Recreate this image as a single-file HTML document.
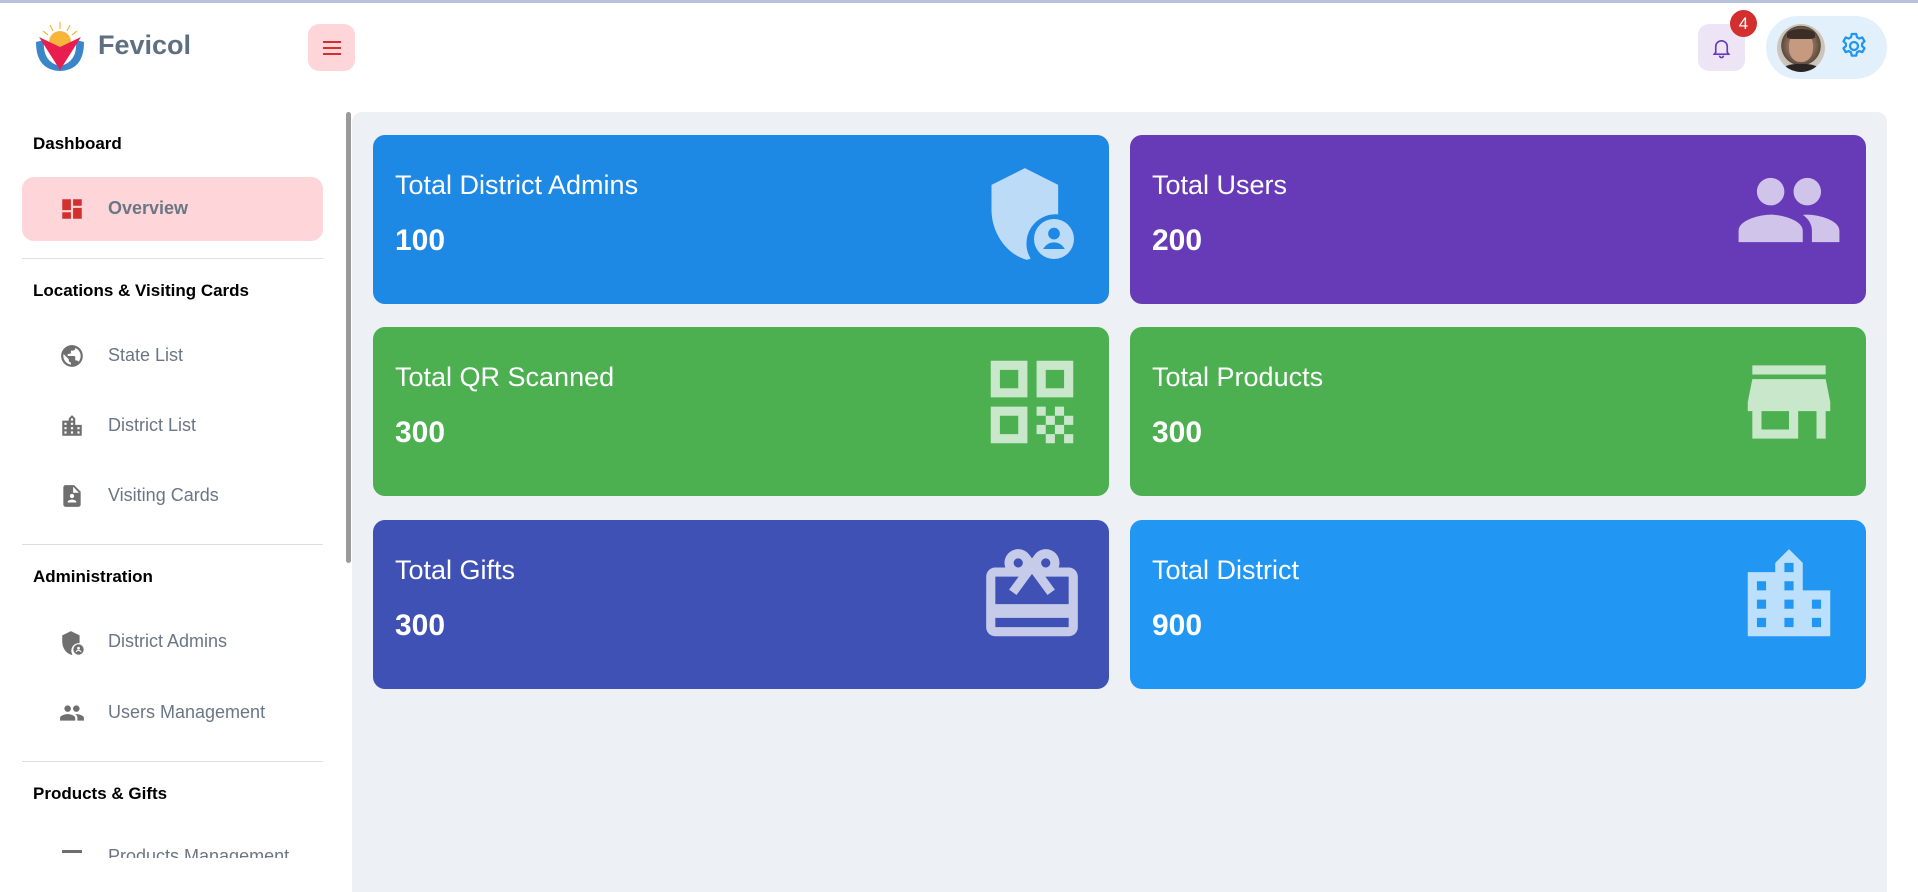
<!DOCTYPE html>
<html><head><meta charset="utf-8"><style>
*{box-sizing:border-box;margin:0;padding:0}
body{width:1918px;height:880px;overflow:hidden;background:#fff;font-family:"Liberation Sans",sans-serif;position:relative}
.topline{position:absolute;left:0;top:0;width:1918px;height:3px;background:#b7c3da}
.abs{position:absolute}
.brand{left:98px;top:30px;font-size:27px;font-weight:bold;color:#5f6f82}
.menu{left:308px;top:24px;width:47px;height:47px;border-radius:11px;background:#fed6da}
.menu i{position:absolute;left:15px;width:18px;height:2px;background:#d32f2f}
.bell{left:1698px;top:24px;width:47px;height:47px;border-radius:11px;background:#ede4f6}
.badge{left:1730px;top:10px;width:27px;height:27px;border-radius:50%;background:#d32f2f;color:#fff;font-size:17px;text-align:center;line-height:27px}
.pill{left:1766px;top:16px;width:121px;height:63px;border-radius:32px;background:#e2f0fc}
.avatar{left:1777px;top:24px;width:48px;height:48px;border-radius:50%;overflow:hidden;background:radial-gradient(circle at 50% 45%,#b08a70 0,#9a7660 30%,#5a4a3e 55%,#c8c2b8 56%,#d8d3cb 100%)}
.side h4{position:absolute;left:33px;font-size:17px;font-weight:bold;color:#000}
.item{position:absolute;left:108px;font-size:18px;color:#6b7684}
.ico{position:absolute;left:59px;width:26px;height:26px}
.div{position:absolute;left:22px;width:301px;height:1px;background:#dedede}
.main{left:352px;top:112px;width:1535px;height:780px;background:#edf0f5;border-radius:10px 10px 0 0}
.scroll{left:346px;top:112px;width:5px;height:451px;background:#9a9a9a;border-radius:3px}
.card{position:absolute;width:736px;height:169px;border-radius:12px;color:#fff}
.card .t{position:absolute;left:22px;top:35px;font-size:27px}
.card .n{position:absolute;left:22px;top:89px;font-size:30px;font-weight:bold}
.card svg{position:absolute;right:22px;top:20px;width:110px;height:110px;fill:rgba(255,255,255,.7)}
</style></head><body>
<div class="topline"></div>
<svg class="abs" style="left:34px;top:20px" width="52" height="54" viewBox="0 0 52 54">
<g stroke="#f7b63a" stroke-width="1.2"><line x1="26" y1="2" x2="26" y2="9"/><line x1="16" y1="5" x2="19" y2="11"/><line x1="36" y1="5" x2="33" y2="11"/><line x1="9" y1="11" x2="14" y2="15"/><line x1="43" y1="11" x2="38" y2="15"/></g>
<circle cx="26" cy="22" r="11" fill="#f7b63a"/>
<path d="M2 22 Q2 50 26 51 Q50 50 50 22 L42 20 Q44 42 26 46 Q8 42 10 20Z" fill="#3a86c8"/>
<path d="M5 17 L26 27 L47 17 L26 50Z" fill="#e91e4f"/>
</svg>
<div class="abs brand">Fevicol</div>
<div class="abs menu"><i style="top:17px"></i><i style="top:23px"></i><i style="top:29px"></i></div>
<div class="abs bell"><svg style="position:absolute;left:12px;top:12px" width="23" height="23" viewBox="0 0 24 24" fill="none" stroke="#673ab7" stroke-width="1.7"><path d="M6 17V11a6 6 0 0 1 12 0v6l1.5 2h-15z"/><path d="M10 20.5a2 2 0 0 0 4 0"/></svg></div>
<div class="abs badge">4</div>
<div class="abs pill"></div>
<div class="abs avatar"><div style="position:absolute;left:12px;top:8px;width:24px;height:30px;border-radius:45%;background:#c59a7e"></div><div style="position:absolute;left:10px;top:5px;width:28px;height:10px;border-radius:50% 50% 20% 20%;background:#3a2e27"></div><div style="position:absolute;left:6px;top:40px;width:36px;height:14px;border-radius:40%;background:#2a2522"></div></div>
<svg class="abs" style="left:1838px;top:30px" width="32" height="32" viewBox="0 0 24 24" fill="none" stroke="#2196f3" stroke-width="1.7"><circle cx="12" cy="12" r="3"/><path d="M10.3 3h3.4l.5 2.4 1.7 1 2.3-.8 1.7 2.9-1.8 1.6v2l1.8 1.6-1.7 2.9-2.3-.8-1.7 1-.5 2.4h-3.4l-.5-2.4-1.7-1-2.3.8-1.7-2.9 1.8-1.6v-2L4.1 8.5l1.7-2.9 2.3.8 1.7-1z" stroke-linejoin="round"/></svg>

<div class="side">
<h4 style="top:134px">Dashboard</h4>
<div class="abs" style="left:22px;top:177px;width:301px;height:64px;border-radius:12px;background:#fed6da"></div>
<svg class="ico" style="top:196px" viewBox="0 0 24 24" fill="#d32f2f"><path d="M3 13h8V3H3v10zm0 8h8v-6H3v6zm10 0h8V11h-8v10zm0-18v6h8V3h-8z"/></svg>
<div class="item" style="top:198px;font-weight:bold">Overview</div>
<div class="div" style="top:258px"></div>
<h4 style="top:281px">Locations &amp; Visiting Cards</h4>
<svg class="ico" style="top:343px" viewBox="0 0 24 24" fill="#6f6f6f"><path d="M12 2C6.48 2 2 6.48 2 12s4.480 10 10 10 10-4.48 10-10S17.52 2 12 2zm-1 17.93c-3.95-.49-7-3.85-7-7.93 0-.62.08-1.21.21-1.79L9 15v1c0 1.1.9 2 2 2v1.93zm6.9-2.54c-.26-.81-1-1.39-1.9-1.39h-1v-3c0-.55-.45-1-1-1H8v-2h2c.55 0 1-.45 1-1V7h2c1.1 0 2-.9 2-2v-.41c2.93 1.19 5 4.06 5 7.41 0 2.08-.8 3.97-2.1 5.39z"/></svg>
<div class="item" style="top:345px">State List</div>
<svg class="ico" style="top:413px" viewBox="0 0 24 24" fill="#6f6f6f"><path d="M15 11V5l-3-3-3 3v2H3v14h18V11h-6zm-8 8H5v-2h2v2zm0-4H5v-2h2v2zm0-4H5V9h2v2zm6 8h-2v-2h2v2zm0-4h-2v-2h2v2zm0-4h-2V9h2v2zm0-4h-2V5h2v2zm6 12h-2v-2h2v2zm0-4h-2v-2h2v2z"/></svg>
<div class="item" style="top:415px">District List</div>
<svg class="ico" style="top:483px" viewBox="0 0 24 24" fill="#6f6f6f"><path d="M14 2H6c-1.1 0-2 .9-2 2v16c0 1.1.9 2 2 2h12c1.1 0 2-.9 2-2V8l-6-6zm-2 8a2 2 0 1 1 0 4 2 2 0 0 1 0-4zm4 8H8v-.6c0-1.3 2.7-2 4-2s4 .7 4 2V18zM13 9V3.5L18.5 9H13z"/></svg>
<div class="item" style="top:485px">Visiting Cards</div>
<div class="div" style="top:544px"></div>
<h4 style="top:567px">Administration</h4>
<svg class="ico" style="top:630px" viewBox="0 0 24 24" fill="#6f6f6f"><path d="M11 1L3 5v6c0 5.5 3.6 10.7 8.5 12 .3-.1.6-.2.9-.3A7 7 0 0 1 19 12.1V5l-8-4z"/><circle cx="18" cy="18" r="4.8"/><circle cx="18" cy="16.8" r="1.3" fill="#fff"/><path d="M15.6 20.2c.6-1 1.5-1.4 2.4-1.4s1.8.4 2.4 1.4" stroke="#fff" fill="none" stroke-width="1"/></svg>
<div class="item" style="top:631px">District Admins</div>
<svg class="ico" style="top:700px" viewBox="0 0 24 24" fill="#6f6f6f"><path d="M16 11c1.66 0 2.99-1.34 2.99-3S17.66 5 16 5c-1.66 0-3 1.34-3 3s1.34 3 3 3zm-8 0c1.66 0 2.99-1.34 2.99-3S9.66 5 8 5C6.34 5 5 6.34 5 8s1.34 3 3 3zm0 2c-2.33 0-7 1.17-7 3.5V19h14v-2.5c0-2.33-4.67-3.5-7-3.5zm8 0c-.29 0-.62.02-.97.05 1.16.84 1.97 1.97 1.97 3.45V19h6v-2.5c0-2.33-4.67-3.5-7-3.5z"/></svg>
<div class="item" style="top:702px">Users Management</div>
<div class="div" style="top:761px"></div>
<h4 style="top:784px">Products &amp; Gifts</h4>
<div class="abs" style="left:0;top:848px;width:345px;height:10px;overflow:hidden"><div style="position:absolute;left:62px;top:2px;width:20px;height:3px;background:#6f6f6f"></div><div style="position:absolute;left:108px;top:-2px;font-size:18px;color:#6b7684">Products Management</div></div>
</div>

<div class="abs main"></div>
<div class="abs scroll"></div>

<div class="card" style="left:373px;top:135px;background:#1e88e5"><div class="t">Total District Admins</div><div class="n">100</div>
<svg viewBox="0 0 24 24" style="width:100px;height:100px;right:30px;top:29px"><path d="M11 1L3 5v6c0 5.5 3.6 10.7 8.5 12 .3-.1.6-.2.9-.3A7 7 0 0 1 19 12.1V5l-8-4z"/><circle cx="18" cy="18" r="4.8"/><circle cx="18" cy="16.7" r="1.4" fill="#1e88e5"/><path d="M15.4 20.4c.6-1.1 1.6-1.6 2.6-1.6s2 .5 2.6 1.6z" fill="#1e88e5"/></svg></div>
<div class="card" style="left:1130px;top:135px;background:#673ab7"><div class="t">Total Users</div><div class="n">200</div>
<svg viewBox="0 0 24 24"><path d="M16 11c1.66 0 2.99-1.34 2.99-3S17.66 5 16 5c-1.66 0-3 1.34-3 3s1.34 3 3 3zm-8 0c1.66 0 2.99-1.34 2.99-3S9.66 5 8 5C6.34 5 5 6.34 5 8s1.34 3 3 3zm0 2c-2.33 0-7 1.17-7 3.5V19h14v-2.5c0-2.33-4.67-3.5-7-3.5zm8 0c-.29 0-.62.02-.97.05 1.16.84 1.97 1.97 1.97 3.45V19h6v-2.5c0-2.33-4.67-3.5-7-3.5z"/></svg></div>
<div class="card" style="left:373px;top:327px;background:#4caf50"><div class="t">Total QR Scanned</div><div class="n">300</div>
<svg viewBox="0 0 24 24"><path d="M3 11h8V3H3v8zm2-6h4v4H5V5zM3 21h8v-8H3v8zm2-6h4v4H5v-4zM13 3v8h8V3h-8zm6 6h-4V5h4v4zM19 19h2v2h-2zM13 13h2v2h-2zM15 15h2v2h-2zM13 17h2v2h-2zM15 19h2v2h-2zM17 17h2v2h-2zM17 13h2v2h-2zM19 15h2v2h-2z"/></svg></div>
<div class="card" style="left:1130px;top:327px;background:#4caf50"><div class="t">Total Products</div><div class="n">300</div>
<svg viewBox="0 0 24 24"><path d="M20 4H4v2h16V4zm1 10v-2l-1-5H4l-1 5v2h1v6h10v-6h4v6h2v-6h1zm-9 4H6v-4h6v4z"/></svg></div>
<div class="card" style="left:373px;top:520px;background:#3f51b5"><div class="t">Total Gifts</div><div class="n">300</div>
<svg viewBox="0 0 24 24"><path d="M20 6h-2.18c.11-.31.18-.65.18-1 0-1.66-1.34-3-3-3-1.05 0-1.96.54-2.5 1.35l-.5.67-.5-.68C10.96 2.54 10.05 2 9 2 7.34 2 6 3.34 6 5c0 .35.07.69.18 1H4c-1.11 0-1.99.89-1.99 2L2 19c0 1.11.89 2 2 2h16c1.11 0 2-.89 2-2V8c0-1.11-.89-2-2-2zm-5-2c.55 0 1 .45 1 1s-.45 1-1 1-1-.45-1-1 .45-1 1-1zM9 4c.55 0 1 .45 1 1s-.45 1-1 1-1-.45-1-1 .45-1 1-1zm11 15H4v-2h16v2zm0-5H4V8h5.08L7 10.83 8.62 12 11 8.76l1-1.36 1 1.36L15.38 12 17 10.83 14.92 8H20v6z"/></svg></div>
<div class="card" style="left:1130px;top:520px;background:#2196f3"><div class="t">Total District</div><div class="n">900</div>
<svg viewBox="0 0 24 24"><path d="M15 11V5l-3-3-3 3v2H3v14h18V11h-6zm-8 8H5v-2h2v2zm0-4H5v-2h2v2zm0-4H5V9h2v2zm6 8h-2v-2h2v2zm0-4h-2v-2h2v2zm0-4h-2V9h2v2zm0-4h-2V5h2v2zm6 12h-2v-2h2v2zm0-4h-2v-2h2v2z"/></svg></div>
</body></html>
